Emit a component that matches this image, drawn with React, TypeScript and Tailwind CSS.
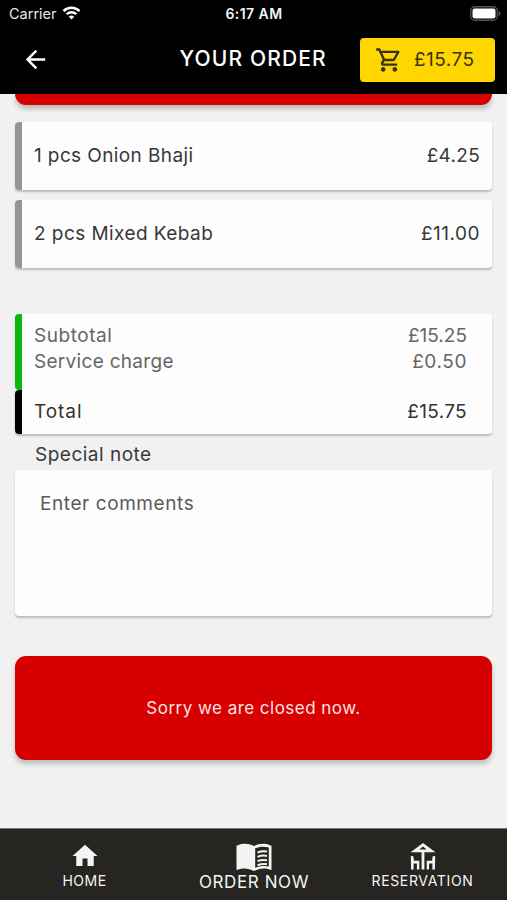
import React from 'react';
import { MdArrowBack, MdHome, MdOutlineShoppingCart } from 'react-icons/md';

const items = [
  { label: '1 pcs Onion Bhaji', price: '£4.25', labelClass: 'tracking-[0.39px]', priceClass: 'tracking-[0.3px]' },
  { label: '2 pcs Mixed Kebab', price: '£11.00', labelClass: 'tracking-[0.44px]', priceClass: 'tracking-[0.5px]' },
] as const;

const cardShadow = 'shadow-[0_2px_2px_rgba(0,0,0,0.22)]';

function StatusBar() {
  return (
    <div className="grid h-7 grid-cols-3 items-center pl-[9px] pr-[6px] text-white">
      <div className="flex items-center gap-[5px]">
        <span className="text-[14.5px] leading-7 text-gray-200">Carrier</span>
        <svg className="-mt-[2px]" width="19" height="14" viewBox="0 0 18 14" fill="none" stroke="currentColor" strokeWidth="2.5">
          <path d="M1 5.1a11.4 11.4 0 0 1 16 0" />
          <path d="M4.2 8.2a7 7 0 0 1 9.6 0" />
          <path d="M9 13.6 6.3 10.8a3.9 3.9 0 0 1 5.4 0z" fill="currentColor" stroke="none" />
        </svg>
      </div>
      <span className="-ml-[2px] text-center text-[14px] font-semibold leading-7 tracking-[0.45px] text-gray-100">6:17 AM</span>
      <svg className="-mt-[2px] justify-self-end" width="31" height="15" viewBox="0 0 31 15">
        <rect x="0.75" y="0.75" width="26.5" height="13.5" rx="4" fill="none" stroke="#555" strokeWidth="1.3" />
        <rect x="2.5" y="2.5" width="23" height="10" rx="2.2" fill="#fff" />
        <path d="M28.6 5v5c1.4-.5 2-1.5 2-2.5s-.6-2-2-2.5z" fill="#555" />
      </svg>
    </div>
  );
}

function Header() {
  return (
    <header className="h-[94px] bg-black">
      <StatusBar />
      <div className="flex h-[63px] items-center pl-[20.5px] pr-[12px] text-white">
        <MdArrowBack size={29} />
        <h1 className="-mt-[2px] ml-[130px] w-[150px] whitespace-nowrap text-[21px] font-medium leading-6 tracking-[1.15px]">
          YOUR ORDER
        </h1>
        <button className="ml-auto flex h-11 w-[135px] items-center rounded-[4px] bg-[#ffd600] pl-[15px] text-[#38330f]">
          <MdOutlineShoppingCart size={28} />
          <span className="ml-[11px] mt-px text-[19px] tracking-[0.45px]">£15.75</span>
        </button>
      </div>
    </header>
  );
}

function MenuBookIcon() {
  return (
    <svg width="36" height="28" viewBox="0 0 36 28" fill="currentColor">
      <path
        fillRule="evenodd"
        d="M.5 2.8C6.2-.2 12.5.3 18 3c5.500-2.700 11.800-3.200 17.500-.2V27c-5.700-2.500-12-2-17.500 1C12.500 25 6.200 24.500.5 27zM19.200 5.200v19.600c4.300-1.800 9-2.300 13.600-1.300V4.600c-4.600-1.500-9.300-1.200-13.600.6z"
      />
      <path
        d="M21.500 9.600c3-1.300 6.300-1.600 9.500-1M21.500 13.900c3-1.300 6.300-1.600 9.500-1M21.500 18.200c3-1.300 6.300-1.600 9.500-1M21.500 22.200c3-1.200 6.300-1.500 9.500-1"
        fill="none"
        stroke="currentColor"
        strokeWidth="2"
      />
    </svg>
  );
}

function DeckIcon() {
  return (
    <svg width="26" height="27" viewBox="0 0 26 27" fill="currentColor">
      <path fillRule="evenodd" d="M13 0l12.500 9.200H.5zM13 3.400L9.300 6.500h7.400z" />
      <path d="M11.600 9h2.800v17.500h-2.800z" />
      <path d="M.8 13.300l2.400-.4.800 4.800h5.300v8.800H6.900v-6.100H3.600v6.100H1.100z" />
      <path d="M25.200 13.300l-2.400-.4-.8 4.800h-5.300v8.800h2.400v-6.100h3.300v6.100h2.500z" />
    </svg>
  );
}

function NavBar() {
  return (
    <nav className="flex h-[72px] shrink-0 border-t border-[#777] bg-[#262522] text-[#f4f4f2]">
      <div className="flex w-[169px] flex-col items-center pt-3">
        <MdHome size={30} />
        <span className="mt-[2px] text-[14px] leading-4 tracking-[0.5px]">HOME</span>
      </div>
      <div className="flex w-[169px] flex-col items-center pt-[14px]">
        <MenuBookIcon />
        <span className="ml-px mt-px text-[17px] leading-5 tracking-[0.6px]">ORDER NOW</span>
      </div>
      <div className="flex w-[169px] flex-col items-center pt-[14px]">
        <DeckIcon />
        <span className="mt-[3px] text-[14px] leading-4 tracking-[0.65px]">RESERVATION</span>
      </div>
    </nav>
  );
}

export default function App() {
  return (
    <div className="flex h-[900px] w-[507px] flex-col overflow-hidden bg-[#f1f1f1] font-['Inter',sans-serif]">
      <Header />
      <main className="flex flex-1 flex-col px-[15px]">
        <div className="h-[11px] rounded-b-[11px] bg-[#d60000] shadow-[0_4px_5px_rgba(0,0,0,0.22)]" />

        <div className="mt-[17px] flex flex-col gap-[10px]">
          {items.map((item) => (
            <div
              key={item.label}
              className={`flex h-[68px] overflow-hidden rounded-[4px] bg-[#fdfdfd] text-[19px] text-[#383838] ${cardShadow}`}
            >
              <div className="w-[7px] bg-[#959595]" />
              <div className="flex flex-1 items-center justify-between pl-3 pr-3">
                <span className={item.labelClass}>{item.label}</span>
                <span className={item.priceClass}>{item.price}</span>
              </div>
            </div>
          ))}
        </div>

        <section className={`mt-[46px] flex h-[120px] rounded-[4px] bg-[#fdfdfd] text-[19px] ${cardShadow}`}>
          <div className="flex w-[7px] flex-col">
            <div className="h-[76px] rounded-l-[4px] bg-[#0bb70b]" />
            <div className="flex-1 rounded-l-[4px] bg-black" />
          </div>
          <div className="flex-1 pl-3 pr-[25px] pt-[9px] leading-[26px] text-[#666]">
            <div className="flex justify-between">
              <span className="tracking-[0.55px]">Subtotal</span>
              <span>£15.25</span>
            </div>
            <div className="flex justify-between">
              <span className="tracking-[0.3px]">Service charge</span>
              <span className="tracking-[0.6px]">£0.50</span>
            </div>
            <div className="mt-6 flex justify-between text-[#333]">
              <span className="tracking-[0.95px]">Total</span>
              <span className="tracking-[0.35px]">£15.75</span>
            </div>
          </div>
        </section>

        <h2 className="ml-5 mt-2 text-[19px] leading-[26px] tracking-[0.5px] text-[#383838]">Special note</h2>
        <div className={`mt-[2px] h-[146px] rounded-[4px] bg-[#fdfdfd] pl-[25px] pt-[21px] text-[19px] leading-[26px] tracking-[0.58px] text-[#5a5a5a] ${cardShadow}`}>
          Enter comments
        </div>

        <div className="mt-10 flex h-[104px] items-center justify-center rounded-[11px] bg-[#d60000] pt-[2px] text-[17px] tracking-[0.47px] text-[#ffe3e3] shadow-[0_4px_5px_rgba(0,0,0,0.22)]">
          Sorry we are closed now.
        </div>
      </main>
      <NavBar />
    </div>
  );
}
